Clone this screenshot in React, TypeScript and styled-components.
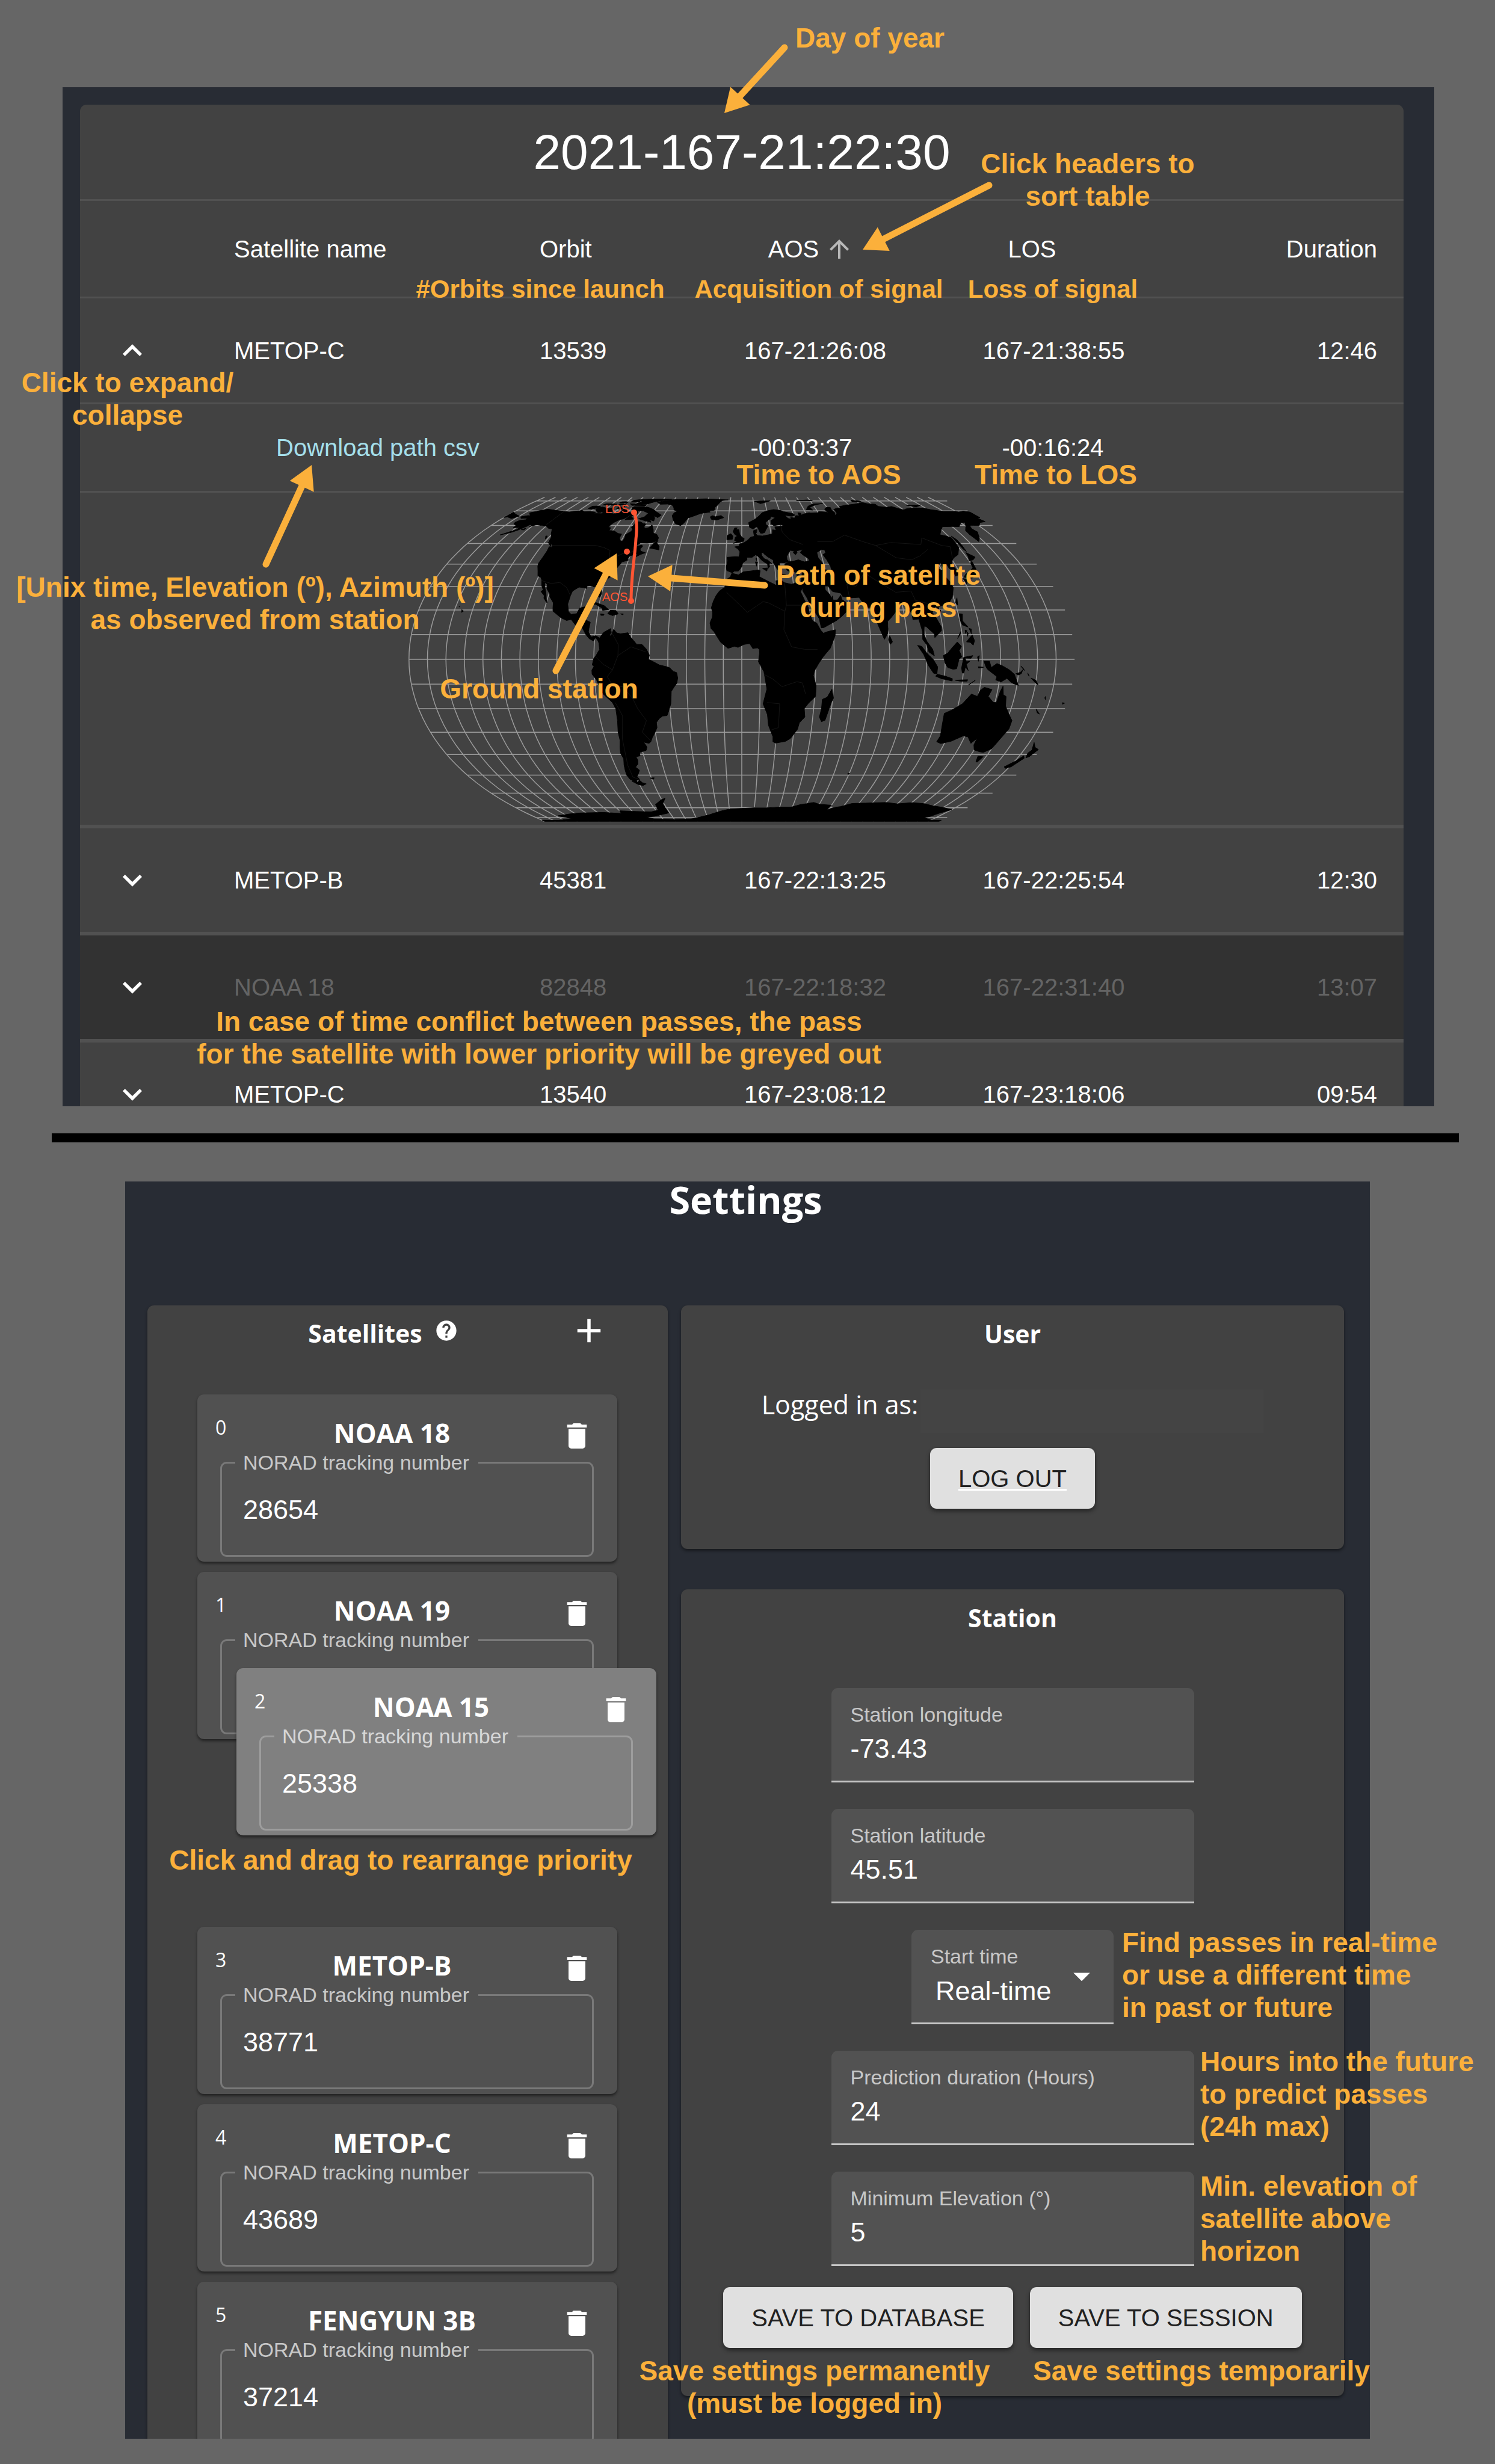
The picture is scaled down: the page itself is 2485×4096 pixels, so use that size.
import React from "react";
import styled, { createGlobalStyle, css } from "styled-components";

const GlobalStyle = createGlobalStyle`
  *, *::before, *::after { box-sizing: border-box; }
  body { margin: 0; background: #666666; }
  button, input, select { font: inherit; color: inherit; }
  h1, h2, h3, p { margin: 0; }
`;

const sans = `"Liberation Sans", Arial, sans-serif`;
const humanist = `"Open Sans", "Noto Sans", sans-serif`;
const orange = "#fbb03b";

const Page = styled.main`
  position: relative;
  min-height: 100vh;
  padding: 145px 0 42px;
  background: #666666;
  color: #ffffff;
  font-family: ${sans};
  overflow: hidden;
`;

/* ---------- passes table ---------- */

const PassesPanel = styled.section`
  height: 1694px;
  margin: 0 101px 0 104px;
  padding: 29px 51px 0 29px;
  background: #282c34;
  overflow: hidden;
`;

const PassesCard = styled.div`
  background: #424242;
  border-radius: 11px 11px 0 0;
`;

const Clock = styled.h1`
  height: 160px;
  border-bottom: 3px solid #515151;
  font-size: 82px;
  font-weight: 400;
  line-height: 157px;
  text-align: center;
`;

const Table = styled.table`
  width: 100%;
  table-layout: fixed;
  border-collapse: separate;
  border-spacing: 0;
  font-size: 40px;
  line-height: 54px;
`;

const Col = styled.col<{ $width?: number }>`
  ${(p) => p.$width && `width: ${p.$width}px;`}
`;

type Align = "left" | "center" | "right";

const cell = css<{ $align?: Align }>`
  padding: 0 44px;
  font-weight: 400;
  text-align: ${(p) => p.$align ?? "left"};
  white-space: nowrap;
`;

const HeadCell = styled.th<{ $align?: Align }>`
  ${cell}
  height: 162px;
  border-bottom: 3px solid #515151;
  ${(p) => p.$align === "center" && "padding: 0;"}
`;

const Cell = styled.td<{ $align?: Align }>`
  ${cell}
  border-bottom: 6px solid #515151;
  ${(p) => p.$align === "center" && "padding: 0;"}
`;

const Row = styled.tr<{ $muted?: boolean; $open?: boolean }>`
  height: ${(p) => (p.$open ? 176 : 178)}px;
  ${(p) => p.$muted && "background: #323232; color: #646464;"}
  ${(p) => p.$open && `${Cell} { border-bottom-width: 3px; }`}
`;

const SortButton = styled.button`
  display: inline-flex;
  align-items: center;
  gap: 10px;
  padding: 0 14px 0 0;
  border: 0;
  background: none;
`;

const SortIcon = styled.svg<{ $active?: boolean }>`
  width: 48px;
  height: 48px;
  fill: #b8b8b8;
  visibility: ${(p) => (p.$active ? "visible" : "hidden")};
`;

const ToggleButton = styled.button`
  display: block;
  width: 64px;
  height: 64px;
  margin: 0 0 0 55px;
  padding: 0;
  border: 0;
  background: none;
  color: #ffffff;
`;

const Icon = styled.svg`
  display: block;
  width: 100%;
  height: 100%;
  fill: currentColor;
`;

const DetailCell = styled.td<{ $line: number }>`
  padding: 0;
  border-bottom: ${(p) => p.$line}px solid #515151;
`;

const DetailGrid = styled.div`
  display: grid;
  grid-template-columns: 45% 19% 19% 17%;
  align-items: center;
  height: 144px;
  text-align: center;
`;

const CsvLink = styled.a`
  color: #a5dfea;
  text-decoration: none;
`;

const MapWrap = styled.div`
  display: flex;
  justify-content: center;
  padding: 7px 0 5px;
`;

const MapSvg = styled.svg`
  display: block;
  width: 1120px;
  height: 540px;
`;

const MapLabel = styled.text`
  fill: #ff5533;
  font: 20px ${sans};
`;

const Divider = styled.hr`
  height: 15px;
  margin: 45px 60px 65px 86px;
  border: 0;
  background: #000000;
`;

/* ---------- settings ---------- */

const SettingsPanel = styled.section`
  height: 2090px;
  margin: 0 208px;
  padding: 0 43px 0 37px;
  background: #282c34;
  overflow: hidden;
`;

const SettingsTitle = styled.h1`
  margin-bottom: 146px;
  font: 700 63px/60px ${humanist};
  text-align: center;
`;

const Columns = styled.div`
  display: grid;
  grid-template-columns: 865fr 1102fr;
  gap: 22px;
  align-items: start;
`;

const RightColumn = styled.div`
  display: flex;
  flex-direction: column;
  gap: 67px;
`;

const Card = styled.div`
  background: #424242;
  border-radius: 11px;
  box-shadow: 0 3px 5px rgba(0, 0, 0, 0.45);
`;

const SatellitesCard = styled(Card)`
  padding: 10px 84px 40px 83px;
`;

const CardTitle = styled.h2`
  font: 700 41px/54px ${humanist};
  text-align: center;
`;

const ListHeader = styled.div`
  display: flex;
  align-items: center;
  height: 64px;
  margin-bottom: 74px;
  padding-right: 14px;
`;

const ListTitle = styled.div`
  display: flex;
  flex: 1;
  align-items: center;
  justify-content: center;
  gap: 20px;

  ${CardTitle} { padding-top: 8px; }
`;

const IconButton = styled.button<{ $size: number }>`
  flex: none;
  width: ${(p) => p.$size}px;
  height: ${(p) => p.$size}px;
  padding: 0;
  border: 0;
  background: none;
  color: #ffffff;
`;

const SatelliteList = styled.ol`
  display: flex;
  flex-direction: column;
  gap: 17px;
  margin: 0;
  padding: 0;
  list-style: none;
`;

const Slot = styled.li`
  position: relative;
  height: 278px;
`;

const SatelliteCard = styled.div<{ $dragging?: boolean }>`
  width: 100%;
  height: 278px;
  padding: 37px 39px 8px 38px;
  border-radius: 11px;
  background: #515151;
  box-shadow: 0 3px 4px rgba(0, 0, 0, 0.5);
  ${(p) =>
    p.$dragging &&
    css`
      position: absolute;
      left: 65px;
      top: -135px;
      z-index: 1;
      background: #808080;
    `}
`;

const SatelliteHeader = styled.div`
  display: flex;
  align-items: flex-start;
  height: 57px;
  margin-left: -8px;
`;

const Priority = styled.span`
  width: 14px;
  font: 32px/36px ${humanist};
`;

const SatelliteName = styled.h3`
  flex: 1;
  font: 700 44px/54px ${humanist};
  text-align: center;
`;

const DeleteSlot = styled.div`
  padding-top: 4px;
`;

const Outlined = styled.fieldset`
  height: 176px;
  min-width: 0;
  margin: 0;
  padding: 32px 22px 0;
  border: 3px solid rgba(255, 255, 255, 0.23);
  border-radius: 11px;
`;

const OutlinedLegend = styled.legend`
  padding: 0 15px 0 13px;
  color: rgba(255, 255, 255, 0.7);
  font-size: 34px;
  line-height: 38px;
`;

const TextInput = styled.input`
  display: block;
  width: 100%;
  height: 56px;
  padding: 0;
  border: 0;
  outline: 0;
  background: transparent;
  color: #ffffff;
  font-size: 45px;
`;

const OutlinedInput = styled(TextInput)`
  padding-left: 13px;
`;

const UserCard = styled(Card)`
  padding: 20px 0 67px;
`;

const StationCard = styled(Card)`
  padding: 20px 0 80px;
`;

const LoggedIn = styled.p`
  display: flex;
  justify-content: center;
  gap: 4px;
  margin: 66px 0 25px;
  font: 43px/50px ${humanist};
`;

const Account = styled.span`
  width: 570px;
  height: 72px;
  background: #444444;
`;

const ButtonRow = styled.div`
  display: flex;
  justify-content: center;
  gap: 28px;
`;

const Button = styled.button`
  height: 101px;
  padding: 0 47px;
  border: 0;
  border-radius: 11px;
  background: #e0e0e0;
  box-shadow: 0 4px 7px rgba(0, 0, 0, 0.45);
  color: #212121;
  font-size: 40px;
  line-height: 54px;
  white-space: nowrap;
`;

const Underlined = styled.span`
  text-decoration: underline 3px #ffffff;
  text-underline-offset: 3px;
`;

const Fields = styled.div`
  display: flex;
  flex-direction: column;
  align-items: center;
  gap: 44px;
  margin: 90px 0 35px;
`;

const Filled = styled.div<{ $narrow?: boolean }>`
  position: relative;
  display: flex;
  flex-direction: column;
  gap: 9px;
  width: ${(p) => (p.$narrow ? 336 : 603)}px;
  height: 157px;
  padding: 24px 32px 0;
  border-bottom: 3px solid #c6c6c6;
  border-radius: 11px 11px 0 0;
  background: #525252;
`;

const FieldLabel = styled.label`
  color: rgba(255, 255, 255, 0.7);
  font-size: 34px;
  line-height: 40px;
`;

const Select = styled.select`
  height: 56px;
  padding: 0 0 0 8px;
  border: 0;
  appearance: none;
  background: transparent;
  color: #ffffff;
  font-size: 45px;
`;

const DropIcon = styled.svg`
  position: absolute;
  top: 44px;
  right: 20px;
  width: 66px;
  height: 66px;
  fill: #ffffff;
  pointer-events: none;
`;

/* ---------- annotations ---------- */

const Note = styled.p<{ $x: number; $y: number; $left?: boolean; $small?: boolean }>`
  position: absolute;
  z-index: 2;
  left: ${(p) => p.$x}px;
  top: ${(p) => p.$y}px;
  color: ${orange};
  font-size: ${(p) => (p.$small ? 42 : 46)}px;
  font-weight: 700;
  line-height: 54px;
  text-align: ${(p) => (p.$left ? "left" : "center")};
  white-space: pre;
  transform: ${(p) => (p.$left ? "none" : "translateX(-50%)")};
`;

const Arrows = styled.svg`
  position: absolute;
  z-index: 2;
  left: 0;
  top: 0;
  width: 2485px;
  height: 1200px;
  fill: ${orange};
  stroke: none;
  pointer-events: none;
`;

/* ---------- world map (Equal Earth projection) ---------- */

const R = 204.4;
const M = Math.sqrt(3) / 2;

function project(lon: number, lat: number): [number, number] {
  const a = [1.340264, -0.081106, 0.000893, 0.003796];
  const t = Math.asin(M * Math.sin((lat * Math.PI) / 180));
  const t2 = t * t;
  const t6 = t2 * t2 * t2;
  const x =
    (((lon * Math.PI) / 180) * Math.cos(t)) /
    (M * (a[0] + 3 * a[1] * t2 + t6 * (7 * a[2] + 9 * a[3] * t2)));
  const y = t * (a[0] + a[1] * t2 + t6 * (a[2] + a[3] * t2));
  return [x * R, -y * R];
}

const linePath = (points: [number, number][]) =>
  "M" +
  points
    .map(([lon, lat]) => project(lon, lat).map((v) => v.toFixed(1)).join(","))
    .join("L");

const parse = (s: string) =>
  s.split(" ").map((p) => p.split(",").map(Number) as [number, number]);

const land = [
  // North and Central America
  "-168,65.6 -164,66.5 -162,66.2 -163.7,67.1 -166.3,68.4 -163,69.5 -161,70.3 -156.6,71.3 -152,70.8 -145,70 -141,69.6 -136,69 -134,69.6 -129,70 -128,70.5 -125,69.5 -120,69.6 -115,68.9 -115.5,67.9 -109,67.9 -108,68.6 -104,68 -98,67.8 -96,68.3 -95.5,69.8 -96.3,71.1 -94.5,72 -92.3,71 -91.5,69.6 -88,68.8 -86,67.9 -85.5,69.6 -82.5,69.6 -81.3,68.5 -82,67.3 -84,66.3 -86.5,66.5 -87,65.3 -88.5,64.2 -91,63.6 -93.5,61.9 -94.6,60.2 -94.7,58.9 -93,58.7 -92.5,57 -89,56.9 -85,55.4 -82.3,55.1 -82.2,53 -80.8,51.5 -79,51.3 -78.7,53 -79.5,54.7 -76.8,56.5 -76.7,57.7 -78.4,59 -77.5,60.5 -78,62.4 -74.5,62.3 -71.5,61.2 -69.5,61 -69.6,59 -67.8,58.3 -66,58.8 -64.6,60.3 -62,57.5 -61,55.7 -58,54.8 -56,53 -56,51.5 -59,50.5 -62,50.2 -66.5,50.3 -68.6,49 -70.5,47.2 -68,48.6 -65,49.2 -64.3,48.5 -65.2,47.2 -64.5,46.2 -61,45.4 -63.5,44.6 -66,43.5 -65.8,44.8 -67,44.8 -70,43.8 -70.8,42.6 -70,41.8 -71.2,41.5 -73.7,41 -74,40 -75,38.8 -76,37 -76.4,38.9 -76.3,37 -75.7,35.5 -78,33.9 -81,32 -81.4,30.4 -80,27 -80.4,25.2 -81.8,26 -82.8,28 -84,30 -85.5,29.8 -88,30.4 -89.5,30.2 -89.4,29.1 -91.5,29.5 -94,29.7 -97,28 -97.4,26 -97.7,22.5 -96.3,19.3 -94.5,18.2 -91.5,18.5 -90.5,20.8 -87,21.5 -87.6,19 -88.2,17.5 -88.6,15.8 -86,15.9 -83.3,15 -83.6,12.5 -83.7,11 -82,9 -79.6,9.5 -77.3,8.6 -78,7.3 -79.5,8.8 -80.5,7.4 -82.8,8.2 -85,10 -85.8,11 -87.6,13 -91.5,14 -94,16.1 -96.5,15.7 -99.8,16.8 -105,19.5 -105.5,21 -106,23 -109,25.6 -109.5,26.8 -112.2,29 -113,31 -114.8,31.7 -114,30 -112,27.5 -110.5,24.5 -109.5,23 -110.3,23.5 -112.1,25 -112.3,26 -115,27.8 -114.1,28.5 -116,30.5 -117.2,32.8 -118.5,34 -120.6,34.6 -122,36.8 -123.7,39 -124.3,40.4 -124,43 -124,46.3 -124.7,48.4 -122.6,48 -123,49 -127.5,51 -128.5,53.5 -130.5,55 -133.5,58 -136.5,58.3 -139.7,59.6 -144,60 -148,60.5 -151.5,59.3 -151.5,61 -154,59.2 -156.5,57.3 -160,55.7 -164.8,54.6 -162,55.8 -158,57.6 -157.3,58.8 -162,58.7 -162,59.9 -165.3,61 -166,62 -164.7,63.2 -161,63.6 -161,64.6 -166,64.5",
  // South America
  "-77.3,8.6 -75.5,10.7 -74.8,11.1 -71.7,12.4 -71.3,11 -71.9,9.2 -71,9.8 -70,12.1 -68.2,10.6 -66,10.3 -64,10.5 -62,10.7 -60.8,9.2 -58.5,7.3 -57,6 -54,5.9 -51.7,4.1 -50,1.7 -50.5,0 -48.5,-0.7 -44.5,-2.3 -41,-2.9 -39,-3.4 -37,-4.9 -35.3,-5.3 -34.8,-7.5 -35.3,-9.5 -37.3,-11.5 -38.6,-13 -39,-16 -39.3,-18 -40.8,-21 -42,-22.9 -44.5,-23.1 -46.5,-24.1 -48.5,-25.8 -48.6,-28 -50,-29.9 -52.2,-32.2 -53.7,-34.2 -55,-34.9 -57.8,-34.4 -58.3,-34 -57.2,-35.5 -56.7,-36.6 -57.7,-38.1 -62,-39 -62.3,-40.6 -65,-41 -64.5,-42.5 -65.3,-44.5 -67.5,-46 -65.8,-47.5 -67.6,-49.5 -69,-50.6 -68.3,-52.4 -70.8,-52.8 -71,-53.8 -74.5,-52.3 -75.5,-50 -75,-47.5 -74.3,-45 -73,-42 -73.7,-39.5 -73,-37 -71.6,-33.5 -71.5,-30 -70.4,-25 -70.2,-20 -71.5,-17.5 -76,-14 -77.2,-12 -79,-8.2 -81.2,-6 -81.2,-4.3 -80,-2.9 -80.9,-2.2 -80,0.5 -78.8,1.6 -77,4 -77.5,6.5 -78,7.3",
  "-68.6,-52.7 -67.5,-54 -65.2,-54.7 -68,-55.6 -71,-55 -74,-53.2 -70.5,-53.8",
  // Arctic islands
  "-73,78.3 -68,80 -60,82 -46,82.7 -32,83.6 -22,82.5 -12,81.6 -17,80.5 -19,78 -20,75.5 -22,73 -22,70.5 -26,70 -25,69 -32,68 -37,66 -40.5,64.8 -42.5,61 -44,60 -48,61 -51,63.5 -53.5,66.5 -53,68.5 -51,69.7 -54.5,70.7 -55.5,72.5 -58.5,75.2 -63,76.2 -69,76 -71,77.3",
  "-90,73.6 -81,73.7 -76,72.7 -71,71 -67,69 -62,66.8 -63.5,65 -67,66.3 -65.5,64.5 -65,62.8 -68.5,63.6 -66.5,62 -71,62.8 -77.5,64.3 -74,65.5 -73,68.2 -78.5,70 -85,70 -89,71.3",
  "-90,76.5 -80,76.2 -78,77.5 -75,79 -65,81.5 -62,82.7 -70,83.1 -80,83 -90,82 -95,81 -88,80 -86,78.5",
  "-95,76.5 -80,75.5 -80,74.6 -92,74.8",
  "-117,70.5 -113,68.6 -105,69 -102,69.8 -105,73 -108,71.8 -115,73.3 -118,71.5",
  "-125,72 -121,71.3 -116,73.3 -119,74.2 -124,74",
  "-117,75.2 -105,75 -106,76.2 -115,76.5",
  "-102,72 -97,71.5 -97,73.8 -101,73.5",
  "-104,75 -98,75 -98,76.6 -103,76.3",
  "-96,78.5 -88,78.5 -90,81 -95,81",
  "-105,77.5 -98,78 -100,79 -104,78.8",
  "-87,63.6 -81,64 -84,65.8 -86,65.8",
  "-59.3,47.7 -53,46.8 -53.5,48.5 -56,50.5 -55.5,51.5 -57.5,50.5",
  "-128,50.8 -123.5,48.4 -125,49.8",
  "-133,54 -131.8,54 -131.2,52.3",
  "-154.5,57.5 -152.3,57.4 -152.5,58.4",
  "-24,65.5 -22.5,66.4 -20,65.7 -16,66.5 -13.6,65 -18.7,63.4 -22.7,63.9",
  "11,79.5 16,76.6 21,78.5 25,80.2 17,80",
  "52,71 57,70.6 56,73 62,75.5 69,76.8 60,76.2 55,74",
  "96,79 104,78.2 103,79.8 96,81",
  "48,80.4 62,80.3 58,81.5",
  "138,75 150,75 144,73.3",
  // Caribbean and Atlantic
  "-84.9,21.9 -82,23.1 -77,21.8 -74.2,20.2 -77.5,19.9 -78,20.8 -82,22.4",
  "-74.4,18.5 -71.5,17.7 -68.5,18.4 -70,19.8 -73.2,19.9",
  "-78.3,18.4 -76.3,18.2 -76.5,17.8 -78,17.8",
  "-67.2,18.4 -65.7,18.4 -65.8,18",
  "-78.2,25.2 -77.6,24 -78,24",
  "-61,-51.5 -58,-51.4 -59,-52.2",
  "-156,20.2 -154.8,19.5 -155.7,19",
  "-158.2,21.6 -157.7,21.3 -158,21.3",
  // Africa
  "-5.9,35.8 -2,35.1 1,36.5 5,36.8 10,37.3 11,37 10.3,34.3 15,32.4 20,30.5 20,32.5 23,32.7 25,31.6 29,30.9 31,31.5 34.2,31.3 34.9,29.5 33.8,27.8 32.6,29.8 33.5,28 35.5,24 37.2,21 37.4,18.8 39,15.5 41.2,14.6 43.2,11.6 44.5,10.5 47,11.2 51.2,11.9 50.8,9.5 48,4.5 44,1 41.5,-1.8 39.3,-4.7 38.8,-6.5 40.5,-10.5 40.6,-15 37,-17.7 34.8,-20 35.5,-23.5 32.7,-26 32,-28.8 28.5,-32.7 25.7,-34 20,-34.8 18.4,-34.2 18.2,-32 15.2,-27 14.4,-22.5 11.8,-18 13.7,-12 13,-9 12,-5 9,-1 9.6,2.5 9.5,4 8.5,4.6 6,4.3 4.3,6.3 1.2,6 -2,4.8 -4,5.2 -7.5,4.4 -11.5,6.9 -13.2,8.8 -15,11 -16.8,12.4 -17.5,14.7 -16.3,17 -16.2,19 -17,21 -16,23.7 -14.5,26.2 -12.8,28 -9.8,29.7 -9.8,31.5 -8.5,33.3 -6.8,34.1",
  "49.3,-12 50.5,-15.7 49.5,-17.5 47.1,-24.9 45.2,-25.5 43.7,-23.5 44.4,-20 44.4,-16.2 47,-15.3",
  // Europe and Asia
  "-9,37 -9.4,38.7 -8.8,41.5 -9.2,43.2 -4,43.5 -1.7,43.4 -1.2,45.8 -2.5,47.3 -4.6,48.3 -1.5,48.7 -1.8,49.7 1.6,50.5 4,51.8 6,53.4 8.5,53.8 8.2,55.6 8.2,57 10.6,57.7 10.3,56.3 9.8,55 11,54.2 14,54 18.5,54.7 21,55.3 21.5,57.5 24,57.1 23.5,59.2 28,59.6 30,59.9 28,60.6 23,59.9 21.3,61 21.5,63 25.3,65 22.2,65.8 21.4,64.4 17.5,62 17.2,60.6 18.9,59.9 16.5,57 15.9,56 14.2,55.5 12.8,55.6 11.2,59 10.5,59.2 8,58 5.6,58.8 5,61.8 9,63.5 13,66 16,68.6 20,70 25.7,71 31,70.3 33,69.4 40,67.8 41,66.6 38,66 33,66.7 34.8,64.5 37,64 37,65.2 40,64.6 40,65.6 42,66.5 44,66.2 44,68.5 46,68.2 46,66.8 48,67.6 53,68.5 54,68.2 60,68.5 61,69.5 65,69.2 68.5,68.4 67,70 67,71.5 69.5,72.9 72.7,72.8 72,71 73,68.5 71.5,66.5 74,67.8 74.5,68.8 74,71 76,71.8 79,72.3 81,72 80.5,73.6 87,75 95,76 104,77.7 107,76.5 113,76 113,73.8 119,73 124,73.7 129,71 131,71 133,71.6 140,72.5 149,72.2 152,70.9 160,69.6 170,69.6 171,69 176,69.8 180,69 180,65 177.5,64.7 179,62.4 174,61.8 170.5,60 166,60 163.3,59.8 162,58 163.2,56.2 161.8,55 159.8,53 156.7,51 155.6,55 156,57 160,59.5 163.5,62 160,61.8 155,59.3 151,59.4 143,59.3 138,56.5 135.3,54.7 138.5,54 141,53 140.5,50.5 140,48 136,44.5 132.5,43.2 130.7,42.3 127.5,39.8 129.3,37 129.2,35.3 126.4,34.5 126.5,37 125,38 125,39.7 121.5,39 122,40.6 119,39.2 117.7,38.8 119,37.3 122.5,37.2 119.5,35.2 121.8,31.8 122,29.5 119.5,25.5 117,23.4 113.7,22.3 110,21.3 110,20.3 108.3,21.6 105.8,19 107.5,16.5 109.3,13 109,11.5 105,8.7 105,10.2 102.5,12 100.9,13.3 100,13.3 99.3,10 100.5,7.2 103.4,4 104.2,1.4 101.3,2.9 100.3,5.8 98.3,8 98.7,11 97.6,16.3 94.3,16 94.3,18.5 92,21.5 91,22.6 87,21.4 86.5,20 82,16.5 80.2,15.3 80,12 79.5,10.3 77.5,8 76.3,10.5 74.5,14.5 72.8,19 72.7,21.2 70.5,21 69,22.4 67.5,23.9 66.5,25.3 61.6,25.1 57.3,25.7 56.5,27.1 52,27.8 50,30 48,30 48,28.5 50,26.7 50.8,24.8 51.5,25.9 51.6,24.2 54,24.2 56.3,26.2 56.6,24.4 59.8,22.5 57.8,19 55.2,17.3 52,15.6 45,12.8 43.5,12.7 42.7,16.5 39,21.2 37,25 35,28 34.9,29.5 34.2,31.3 35,33 36,36 35.8,36.8 32.5,36.1 30.5,36.7 27.5,36.9 26.3,38.5 26.2,40 29.2,41.2 31.5,41.3 35,42 38.5,41 41.5,41.5 41.5,42.5 38.5,44.3 37,45.5 39.2,47.1 35,46.3 35,45.4 33.7,44.4 32.6,45.4 33.5,46.1 31,46.6 29.6,45.3 28,43.5 28,42 29,41.3 26.2,40.6 24,40.7 22.8,40.3 24,38 22.7,36.6 21.3,37.7 19.4,40.5 19.4,41.9 16,43.5 13.8,45 13.7,45.6 12.4,45.3 12.5,44 14,42.5 16,41.9 18.4,40.2 17,40.5 16.7,39.5 17,39 15.9,38 15.7,40 14,40.8 12,42 10.4,43.5 8.7,44.4 6.5,43.2 3.1,43.2 3.2,42 0.5,40.5 0,38.8 -2,36.8 -4.5,36.7 -5.6,36",
  "47.5,45.5 51,47 53,46.8 53,45.3 51,44.5 52.5,42 53.8,39 53.9,37 50,37.4 49,38.5 49.5,40.3 47.5,43",
  "-180,69 -175,67.3 -170,66.1 -173,64.4 -178,65.5 -180,65.1",
  "-5.5,50.1 1.3,51.2 1.6,52.7 0.2,53.2 -1.5,55 -2,57.5 -4,57.7 -3.2,58.6 -5,58.6 -6,56.5 -5,55 -3,54 -4.5,53.2 -4.5,52 -5.2,51.8 -3,51.3",
  "-10,52 -6.3,52.2 -6,54 -7.5,55.3 -10,54.2",
  "12.5,38 15.5,38.2 15,36.8",
  "8.3,41 9.7,41 9,39",
  "8.7,42.5 9.4,42.9 9.2,41.5",
  "23.6,35.5 26,35.2 24,35",
  "32.4,35 34.4,35.6 33.2,34.7",
  // Eastern Asia
  "142,54 143.3,52 143.3,49 142.8,46 142,47",
  "140,41.5 143,42 145.5,43.3 141.9,45.5 141.3,43.3",
  "131,34 135.5,33.6 139.8,35 141,38 141.5,41.3 140,40.5 139.5,38.3 136,36.5 133,35.4",
  "130,33.5 132,33 130.7,31",
  "132.3,33.4 134.5,34.2 133.5,33",
  "120.2,23 121.9,25.1 121,22",
  "108.7,19 110.8,20 109.5,18.2",
  "120.3,16 120.6,18.5 122.3,18.3 121.5,15.5 124,13 121,13.8",
  "122,7 124,8.7 125.5,9.8 126.4,7.5 125.5,5.7 124,6.8",
  "117.3,8.4 119.5,11.2 119,10",
  "122,11.8 123,11.5 122,10.4",
  "124.3,12.5 125.5,12.2 125.2,10.3",
  "123,10.9 123.5,10.5 122.8,9.2",
  // South-east Asia and Oceania
  "109,1.5 111.5,2.5 114,4.7 117,7 119,5.2 117.7,3.5 119,1 117.5,0 116.3,-3.8 114.5,-4 111.5,-3.3 110,-1.5",
  "95.3,5.6 97.5,5.2 100.5,2.2 103.5,0 106,-3 105.8,-5.8 104,-5.6 101,-2.5 98.5,1.8",
  "105.2,-6.8 106,-6 110.5,-6.8 114.4,-7.8 114.4,-8.7 108.5,-7.8",
  "119,-3.5 120,0.8 125,1.5 124,0.4 120.7,0.5 121.5,-1 123.3,-0.8 121.5,-2 122.6,-4.5 121,-3 120.4,-5.5 119.5,-5.5",
  "116,-8.4 119,-8.3 122.8,-8.2 122.5,-8.8 119,-8.8",
  "123.5,-10.3 127,-8.4 126,-9",
  "127.5,1 128.5,1.5 128,-0.8",
  "128,-3 130.8,-3.2 128.2,-3.5",
  "131,-0.8 134,-0.8 135,-3.3 138,-1.7 141,-2.6 145,-4.3 147.8,-6 150.8,-10.5 147,-9.5 144,-7.7 141,-9.1 138,-8.3 138.5,-7 133,-4 132,-2.8",
  "148.5,-5.8 151,-5.2 152.2,-4.2 151.5,-5.8 150,-6.3",
  "151,-2.7 153,-4.5 152.6,-3.8",
  "155,-5.5 156,-6.8 155.5,-6.5",
  "157,-7.5 159.8,-8.4 161.5,-10.2 160,-9.6",
  "164,-20.2 167,-22.3 165.5,-21.8",
  "167,-15 167.5,-16.3 166.8,-15.6",
  "177.5,-17.5 178.6,-17.8 177.6,-18.2",
  "79.8,8 80.5,9.5 81.8,7 80.5,6",
  "113.5,-22 114.2,-26.3 115.7,-31.6 115,-34.2 118,-35 123.5,-33.9 129,-31.6 132,-32 135.7,-34.9 137.8,-32.6 138,-35.6 140,-37.9 144,-38.7 146.5,-39 150,-37.4 151.5,-33 153.5,-28.5 153,-25 149.5,-22 146.5,-19 145.3,-15 143.6,-14.3 142.5,-10.8 141.5,-13 140.8,-17.5 139,-17.4 135.5,-15 136.8,-12.2 132.5,-11.3 130.5,-12.5 129.5,-15 126,-14 122.2,-18 117,-20.7",
  "144.8,-40.8 148.3,-41 147,-43.6 146,-43.3",
  "172.8,-34.5 175.5,-36.7 178.5,-37.7 176.5,-41 175,-41.5 173.8,-39.3 174.9,-38",
  "172.7,-40.6 174.2,-41.7 171,-45.8 168.5,-46.6 166.6,-45.9 170.5,-43",
  "69,-49 70.3,-49.2 69.5,-49.7",
  // Antarctica
  "-180,-84.5 -165,-84.5 -150,-81.5 -158,-77.5 -145,-75.5 -135,-74.5 -115,-74 -101,-75 -100,-72.5 -90,-73 -75,-73.5 -68,-72 -67,-67.5 -60,-64 -57,-63.3 -61,-67 -61,-71 -61,-74.5 -75,-78 -83,-79 -78,-82 -60,-83 -45,-82 -36,-79 -28,-76.5 -18,-73 -10,-71 0,-70.5 10,-70 20,-70 30,-69.5 39,-69.5 45,-67.7 55,-66 60,-67.3 70,-68 69,-72 73,-69.8 78,-69 85,-66.7 95,-66.5 110,-66 120,-67 130,-66.2 140,-66.8 150,-68.5 160,-69.7 170,-71.5 165,-75 163,-78 160,-80 170,-84 180,-84.5 180,-90 -180,-90",
];

const borders = [
  "-141,69.6 -141,60.3",
  "-123,49 -95,49 -89,48 -84,46.5 -82.5,43 -79,43.3 -75,45 -71,45.2 -67.5,47 -67,44.8",
  "-117,32.5 -111,31.3 -106,31.7 -101,29.5 -97.4,26",
  "-70,-4.2 -73,-7 -70,-11 -65,-11 -60,-16 -58,-20 -54,-25 -57.5,-30 -53.7,-33.8",
  "-70,-17.5 -67,-23 -70,-33 -72,-45 -72,-51 -68.5,-52.3",
  "-72,12 -67,6 -67,1.5 -70,-4.2 -75,-2 -79,1",
  "-67,1.5 -60,5 -52,3",
  "-8.7,27.5 -1,22 3,19 12,23.5 15,23 24,19.5 25,22 25,31.6",
  "25,22 37,22",
  "24,19.5 23,12 27,5 34,4 41,4",
  "12,-6 17,-8 22,-11 30,-9 33,-9.5 35,-14",
  "14,-17.5 21,-18 21,-28 17,-29",
  "28,60.6 28,56 32,52 40,49.5",
  "50,51 60,51 70,54.5 80,51 87,49 98,50.5 117,49.5 121,53 130,49 135,48.4 131,43",
  "87,49 96,43 105,42 112,44 119,47",
  "61,25.3 61,31 66,30 73,36 78,33 88,27.5 97,28 98,24 106,22.5",
];

const landPath = land.map((s) => linePath(parse(s)) + "Z").join("");
const borderPath = borders.map((s) => linePath(parse(s))).join("");

const steps = (from: number, to: number, by: number) =>
  Array.from({ length: Math.round((to - from) / by) + 1 }, (_, i) => from + i * by);

const graticulePath =
  steps(-180, 170, 10)
    .map((lon) => linePath(steps(-90, 90, 3).map((lat) => [lon, lat] as [number, number])))
    .join("") +
  steps(-80, 80, 10)
    .map((lat) => linePath([[-180, lat], [180, lat]]))
    .join("");

function WorldMap() {
  return (
    <MapSvg viewBox="-560 -270 1120 540" role="img" aria-label="Path of the satellite">
      <path d={graticulePath} fill="none" stroke="#9a9a9a" strokeWidth="1.5" />
      <path d={landPath} fill="#000" fillRule="evenodd" stroke="#000" strokeWidth="1" />
      <path d={borderPath} fill="none" stroke="#141414" strokeWidth="1" />
      <path
        d="M-179-244C-174-232-174-216-176-200C-177-176-184-140-184-97"
        fill="none"
        stroke="#ff5533"
        strokeWidth="5"
      />
      <g fill="#ff5533">
        <circle cx="-179" cy="-244" r="5" />
        <circle cx="-184" cy="-97" r="5" />
        <circle cx="-191" cy="-179" r="5" />
      </g>
      <MapLabel x="-227" y="-243">LOS</MapLabel>
      <MapLabel x="-232" y="-97">AOS</MapLabel>
    </MapSvg>
  );
}

/* ---------- pieces ---------- */

const paths = {
  up: "M7.41 15.41L12 10.83l4.59 4.58L18 14l-6-6-6 6z",
  down: "M7.41 8.59L12 13.17l4.59-4.58L18 10l-6 6-6-6 1.41-1.41z",
  arrowUp: "M4 12l1.41 1.41L11 7.83V20h2V7.83l5.58 5.59L20 12l-8-8-8 8z",
  add: "M19 13h-6v6h-2v-6H5v-2h6V5h2v6h6v2z",
  trash: "M6 19c0 1.1.9 2 2 2h8c1.1 0 2-.9 2-2V7H6v12zM19 4h-3.5l-1-1h-5l-1 1H5v2h14V4z",
  help: "M12 2C6.48 2 2 6.48 2 12s4.48 10 10 10 10-4.48 10-10S17.52 2 12 2zm1 17h-2v-2h2v2zm2.07-7.75l-.9.92C13.45 12.9 13 13.5 13 15h-2v-.5c0-1.1.45-2.1 1.17-2.83l1.24-1.26c.37-.36.59-.86.59-1.41 0-1.1-.9-2-2-2s-2 .9-2 2H8c0-2.21 1.79-4 4-4s4 1.79 4 4c0 .88-.36 1.68-.93 2.25z",
  drop: "M7 10l5 5 5-5z",
};

const Glyph = ({ name }: { name: keyof typeof paths }) => (
  <Icon viewBox="0 0 24 24" aria-hidden="true">
    <path d={paths[name]} />
  </Icon>
);

function SortLabel({ children, active }: { children: string; active?: boolean }) {
  return (
    <SortButton type="button">
      {children}
      <SortIcon viewBox="0 0 24 24" $active={active} aria-hidden="true">
        <path d={paths.arrowUp} />
      </SortIcon>
    </SortButton>
  );
}

interface Pass {
  name: string;
  orbit: string;
  aos: string;
  los: string;
  duration: string;
  open?: boolean;
  muted?: boolean;
}

const passes: Pass[] = [
  { name: "METOP-C", orbit: "13539", aos: "167-21:26:08", los: "167-21:38:55", duration: "12:46", open: true },
  { name: "METOP-B", orbit: "45381", aos: "167-22:13:25", los: "167-22:25:54", duration: "12:30" },
  { name: "NOAA 18", orbit: "82848", aos: "167-22:18:32", los: "167-22:31:40", duration: "13:07", muted: true },
  { name: "METOP-C", orbit: "13540", aos: "167-23:08:12", los: "167-23:18:06", duration: "09:54" },
];

function PassRow({ pass }: { pass: Pass }) {
  return (
    <>
      <Row $open={pass.open} $muted={pass.muted}>
        <Cell $align="center">
          <ToggleButton
            type="button"
            aria-expanded={!!pass.open}
            aria-label={`Toggle ${pass.name} ${pass.orbit}`}
          >
            <Glyph name={pass.open ? "up" : "down"} />
          </ToggleButton>
        </Cell>
        <Cell>{pass.name}</Cell>
        <Cell>{pass.orbit}</Cell>
        <Cell $align="center">{pass.aos}</Cell>
        <Cell $align="center">{pass.los}</Cell>
        <Cell $align="right">{pass.duration}</Cell>
      </Row>
      {pass.open && (
        <>
          <tr>
            <DetailCell colSpan={6} $line={3}>
              <DetailGrid>
                <CsvLink href="#csv">Download path csv</CsvLink>
                <span>-00:03:37</span>
                <span>-00:16:24</span>
              </DetailGrid>
            </DetailCell>
          </tr>
          <tr>
            <DetailCell colSpan={6} $line={6}>
              <MapWrap>
                <WorldMap />
              </MapWrap>
            </DetailCell>
          </tr>
        </>
      )}
    </>
  );
}

const satellites = [
  { name: "NOAA 18", norad: "28654" },
  { name: "NOAA 19", norad: "33591" },
  { name: "NOAA 15", norad: "25338", dragging: true },
  { name: "METOP-B", norad: "38771" },
  { name: "METOP-C", norad: "43689" },
  { name: "FENGYUN 3B", norad: "37214" },
];

function Satellite({ index, name, norad, dragging }: { index: number; name: string; norad: string; dragging?: boolean }) {
  const id = `norad-${index}`;
  return (
    <Slot>
      <SatelliteCard $dragging={dragging}>
        <SatelliteHeader>
          <Priority>{index}</Priority>
          <SatelliteName>{name}</SatelliteName>
          <DeleteSlot>
            <IconButton type="button" $size={56} aria-label={`Delete ${name}`}>
              <Glyph name="trash" />
            </IconButton>
          </DeleteSlot>
        </SatelliteHeader>
        <Outlined>
          <OutlinedLegend>
            <label htmlFor={id}>NORAD tracking number</label>
          </OutlinedLegend>
          <OutlinedInput id={id} defaultValue={norad} />
        </Outlined>
      </SatelliteCard>
    </Slot>
  );
}

function Field({ id, label, value }: { id: string; label: string; value: string }) {
  return (
    <Filled>
      <FieldLabel htmlFor={id}>{label}</FieldLabel>
      <TextInput id={id} defaultValue={value} />
    </Filled>
  );
}

const HEAD_LENGTH = 39;
const HEAD_HALF = 22;

function Arrow({ from, to }: { from: [number, number]; to: [number, number] }) {
  const [x1, y1] = from;
  const [x2, y2] = to;
  const length = Math.hypot(x2 - x1, y2 - y1);
  const ux = (x2 - x1) / length;
  const uy = (y2 - y1) / length;
  const bx = x2 - ux * HEAD_LENGTH;
  const by = y2 - uy * HEAD_LENGTH;
  return (
    <>
      <line x1={x1} y1={y1} x2={bx} y2={by} stroke={orange} strokeWidth="11" strokeLinecap="round" />
      <polygon
        points={`${x2},${y2} ${bx - uy * HEAD_HALF},${by + ux * HEAD_HALF} ${bx + uy * HEAD_HALF},${by - ux * HEAD_HALF}`}
      />
    </>
  );
}

export default function App() {
  return (
    <Page>
      <GlobalStyle />

      <PassesPanel>
        <PassesCard>
          <Clock>2021-167-21:22:30</Clock>
          <Table>
            <colgroup>
              <Col $width={212} />
              <Col $width={508} />
              <Col $width={304} />
              <Col $width={396} />
              <Col $width={397} />
              <Col />
            </colgroup>
            <thead>
              <tr>
                <HeadCell aria-label="Expand" />
                <HeadCell>Satellite name</HeadCell>
                <HeadCell><SortLabel>Orbit</SortLabel></HeadCell>
                <HeadCell $align="center"><SortLabel active>AOS</SortLabel></HeadCell>
                <HeadCell $align="center"><SortLabel>LOS</SortLabel></HeadCell>
                <HeadCell $align="right">Duration</HeadCell>
              </tr>
            </thead>
            <tbody>
              {passes.map((pass) => (
                <PassRow key={pass.aos} pass={pass} />
              ))}
            </tbody>
          </Table>
        </PassesCard>
      </PassesPanel>

      <Divider />

      <SettingsPanel>
        <SettingsTitle>Settings</SettingsTitle>
        <Columns>
          <SatellitesCard>
            <ListHeader>
              <ListTitle>
                <CardTitle>Satellites</CardTitle>
                <IconButton type="button" $size={40} aria-label="Help">
                  <Glyph name="help" />
                </IconButton>
              </ListTitle>
              <IconButton type="button" $size={66} aria-label="Add satellite">
                <Glyph name="add" />
              </IconButton>
            </ListHeader>
            <SatelliteList>
              {satellites.map((satellite, index) => (
                <Satellite key={satellite.norad} index={index} {...satellite} />
              ))}
            </SatelliteList>
          </SatellitesCard>

          <RightColumn>
            <UserCard>
              <CardTitle>User</CardTitle>
              <LoggedIn>
                Logged in as:
                <Account />
              </LoggedIn>
              <ButtonRow>
                <Button type="button"><Underlined>LOG OUT</Underlined></Button>
              </ButtonRow>
            </UserCard>

            <StationCard>
              <CardTitle>Station</CardTitle>
              <Fields>
                <Field id="longitude" label="Station longitude" value="-73.43" />
                <Field id="latitude" label="Station latitude" value="45.51" />
                <Filled $narrow>
                  <FieldLabel htmlFor="start">Start time</FieldLabel>
                  <Select id="start" defaultValue="real">
                    <option value="real">Real-time</option>
                  </Select>
                  <DropIcon viewBox="0 0 24 24" aria-hidden="true"><path d={paths.drop} /></DropIcon>
                </Filled>
                <Field id="duration" label="Prediction duration (Hours)" value="24" />
                <Field id="elevation" label="Minimum Elevation (°)" value="5" />
              </Fields>
              <ButtonRow>
                <Button type="button">SAVE TO DATABASE</Button>
                <Button type="button">SAVE TO SESSION</Button>
              </ButtonRow>
            </StationCard>
          </RightColumn>
        </Columns>
      </SettingsPanel>

      <Arrows viewBox="0 0 2485 1200" aria-hidden="true">
        <Arrow from={[1304, 79]} to={[1204, 188]} />
        <Arrow from={[1644, 308]} to={[1434, 415]} />
        <Arrow from={[442, 938]} to={[518, 773]} />
        <Arrow from={[924, 1115]} to={[1025, 920]} />
        <Arrow from={[1271, 973]} to={[1077, 958]} />
      </Arrows>

      <Note $x={1322} $y={36} $left>Day of year</Note>
      <Note $x={1808} $y={245}>{"Click headers to\nsort table"}</Note>
      <Note $x={898} $y={454} $small>#Orbits since launch</Note>
      <Note $x={1361} $y={454} $small>Acquisition of signal</Note>
      <Note $x={1750} $y={454} $small>Loss of signal</Note>
      <Note $x={212} $y={609}>{"Click to expand/\ncollapse"}</Note>
      <Note $x={1361} $y={762}>Time to AOS</Note>
      <Note $x={1755} $y={762}>Time to LOS</Note>
      <Note $x={424} $y={949}>{"[Unix time, Elevation (º), Azimuth (º)]\nas observed from station"}</Note>
      <Note $x={1460} $y={929}>{"Path of satellite\nduring pass"}</Note>
      <Note $x={896} $y={1118}>Ground station</Note>
      <Note $x={896} $y={1671}>{"In case of time conflict between passes, the pass\nfor the satellite with lower priority will be greyed out"}</Note>
      <Note $x={666} $y={3065}>Click and drag to rearrange priority</Note>
      <Note $x={1865} $y={3202} $left>{"Find passes in real-time\nor use a different time\nin past or future"}</Note>
      <Note $x={1995} $y={3400} $left>{"Hours into the future\nto predict passes\n(24h max)"}</Note>
      <Note $x={1995} $y={3607} $left>{"Min. elevation of\nsatellite above\nhorizon"}</Note>
      <Note $x={1354} $y={3914}>{"Save settings permanently\n(must be logged in)"}</Note>
      <Note $x={1997} $y={3914}>Save settings temporarily</Note>
    </Page>
  );
}
